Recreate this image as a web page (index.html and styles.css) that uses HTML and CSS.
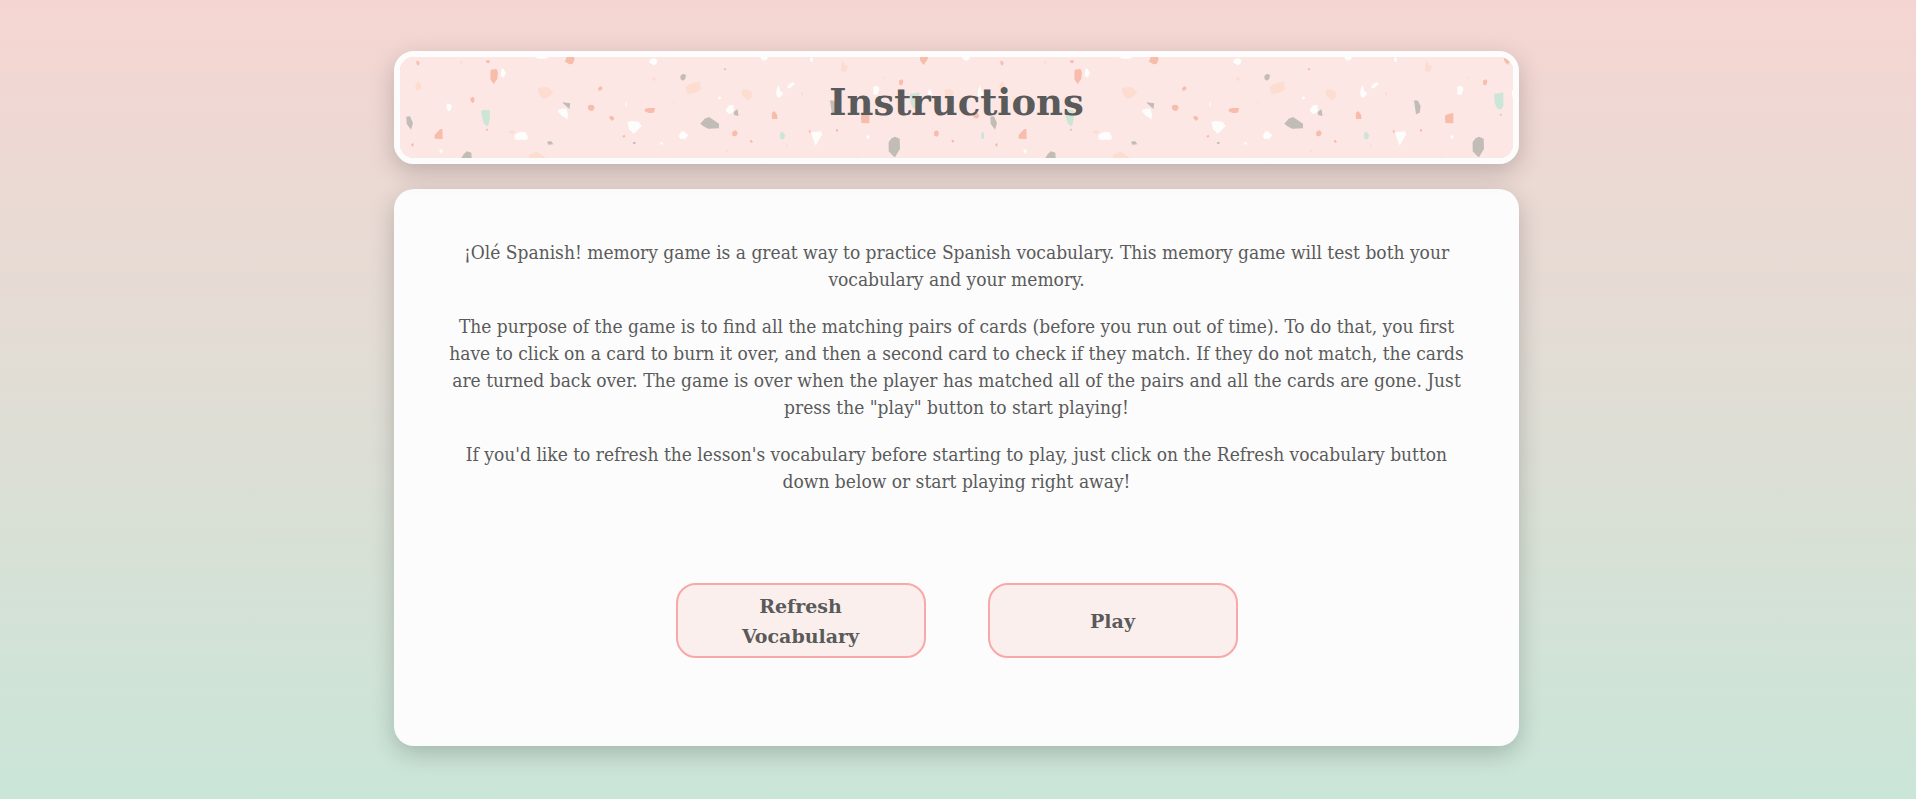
FILE: index.html
```html
<!DOCTYPE html>
<html lang="en">
<head>
<meta charset="utf-8">
<meta name="viewport" content="width=device-width, initial-scale=1">
<title>¡Olé Spanish! Instructions</title>
<link rel="stylesheet" href="styles.css">
</head>
<body>
<div class="page">
  <header class="banner">
    <svg class="terrazzo" aria-hidden="true" width="100%" height="100%">
      <defs>
        <pattern id="terrazzo" width="1752" height="900" patternUnits="userSpaceOnUse" patternTransform="scale(0.33333)">
          <rect class="base" width="1752" height="900"/>
          <g class="coral">
            <path d="M49 11l7 2 3 6-4 7-5-4zM259 10l9 0 2 5-5 4-7-3zM272 38l17-2 5 9-2 20-11 16-10-14zM500 0h22l2 6-6 15-10 1-13-8zM211 125l6-6 6 4 0 10-4 6-7-6zM121 216l6 0 1 30-24-1 0-11zM257 216l7-1 1 4-4 4zM33 262l7-4 1 7-4 5zM594 94l7-6 7 4-4 8-8 1zM564 147l7-4 10 2 3 8-5 8-9 0-6-6zM736 155l9-2 20 0 0 4-4 10-15 1-13-6zM627 180l7-4 9 6-2 7-7 2zM667 237l7-4 2 6-6 3zM971 34l6 0 3 4-7 2zM1117 165l7-2 8 12 0 11-15 0-2-7zM999 223l7-3 5 3 2 8-6 7-9-1-2-8zM1049 250l5-1 4 3-1 5-5 0zM1225 221l6-2 1 9-3 0zM1307 217l7-1 0 7-5 2zM1559 0h25l-1 6-12 18-10-13zM1498 70l9-3 3 6-4 12-8-2-1-7zM1384 175l10-4 14-3 0 31-24-1-1-14zM1603 223l7-3 6 4 0 9-5 6-9-3zM1654 249l6-1 3 6-6 3zM1546 172l6-1 2 3-4 3zM1720 172l14-3 4 10-8 6-10-4z"/>
          </g>
          <g class="peach">
            <path d="M178 16l6-5 5 5-5 8zM46 83l9-12 10 15-5 14-12 0zM418 93l10-2 15 0 17 15-10 11-14 9-14-6-9-19zM323 223l14-3 9 5-9 7zM386 303l2-9 21-10 22 13 6 6zM754 66l7-5 9 4-6 7zM818 137l6-2 1 4-4 1zM857 89l19-11 24-4 2 24-16 9-25 4zM1028 97l17 1 12 8-3 15-10 11-6-8-11-6-2-8zM1330 11l4 13 9 2-3 15-9 6-9-8 2-17zM1202 108l5-2 3 8-5 3zM1156 265l5-4 3 5-5 3zM978 279l5-2 1 8-5-1zM1634 97l16-1 11 7-3 15-10 9-12-10zM1450 62l5-3 2 4-5 2zM1367 302l4-3 3 4z"/>
          </g>
          <g class="mint">
            <path d="M243 163l8-4 18 0 1 18-3 23-6 8-9-8-5-15zM1140 227l6-3 10 10-4 12-11 0zM1531 110l8 0 19-4 0 42-8 10-11-4-7-17zM1744 227l8-2v20h-8z"/>
          </g>
          <g class="white">
            <path d="M303 40l5-7 10 14-4 10-7 6-5-10zM140 139l15 4 0 9-7 12-6-5-2-7zM118 279l8-3 2 8-7 6zM403 0h43l-8 5-22 0zM347 230l12-5 18 1 8 18-8 5-31-1-4-10zM475 159l10-4 14 0 5 15-1 17-18-11-12-13zM750 7l14-3 9 6-4 11-9 4-13-9zM682 196l10-4 24 2 9 14-24 23-14-15zM676 136l3-2 1 14-4-1zM780 257l7-3 2 8-8 1zM836 238l7-14 7-3 15 13-9 12-15-1zM1080 0h24l-4 8-11 4zM1230 4l5-4 4 7-1 9-7-3zM952 122l7-4 5 5-6 5zM987 145l13-2 2 15-5 11-12 2-8-12zM1129 98l7-15 5 20 9 4-5 10-11 7-5-11zM1161 90l9-11 12-3 2 5-9 9-10 5zM1233 226l30-3 4 9-20 34-6-15zM1399 237l6-3 4 5-4 8-4-3zM1420 89l9-3 9 5-1 12-5 11-12-2zM1583 101l8-4 5 13-4 14-7-3zM1686 0h25l-5 9-9 3-8-5zM1734 102l5-17 6 16 7 5v10l-19 2z"/>
          </g>
          <g class="stone">
            <path d="M19 179l11-1 9 21-6 19-13-18zM184 303l8-13 9-7 13 4 1 16zM486 136l25 3-3 17zM441 254l12-2 7 10-15 1zM697 257l7-3 4 5-6 3zM841 57l7-6 10 2-2 12-7 6-7-4zM901 200l13-15 13-5 9 6 21 14 0 14-33 1-15-8zM1001 166l11-10 4 21-13-3zM1466 255l9-11 10-5 14 6 1 30-15 26-6-5-13-13zM1290 130l12 1 8 17-3 19-11 5z"/>
          </g>
        </pattern>
      </defs>
      <rect width="100%" height="100%" fill="url(#terrazzo)"/>
    </svg>
    <h1 class="title">Instructions</h1>
  </header>
  <main class="card">
    <p>¡Olé Spanish! memory game is a great way to practice Spanish vocabulary. This memory game will test both your vocabulary and your memory.</p>
    <p>The purpose of the game is to find all the matching pairs of cards (before you run out of time). To do that, you first have to click on a card to burn it over, and then a second card to check if they match. If they do not match, the cards are turned back over. The game is over when the player has matched all of the pairs and all the cards are gone. Just press the "play" button to start playing!</p>
    <p>If you'd like to refresh the lesson's vocabulary before starting to play, just click on the Refresh vocabulary button down below or start playing right away!</p>
    <div class="actions">
      <button class="btn" type="button">Refresh Vocabulary</button>
      <button class="btn" type="button">Play</button>
    </div>
  </main>
</div>
</body>
</html>
```
FILE: styles.css
```css
* { box-sizing: border-box; }

body {
  margin: 0;
  padding-right: 3px;
  min-height: 100vh;
  background: linear-gradient(#f5d5d2, #cae6d8);
  color: #5a5a5a;
  font-family: "DejaVu Serif Condensed", "DejaVu Serif", serif;
}

.page {
  display: flex;
  flex-direction: column;
  gap: 25px;
  width: 90%;
  max-width: 1125px;
  margin: 0 auto;
  padding: 51px 0 53px;
}

.banner,
.card {
  border-radius: 20px;
  box-shadow: 0 8px 24px rgba(0, 0, 0, 0.2);
}

.banner {
  position: relative;
  overflow: hidden;
  padding: 21px 20px 32px;
  border: 6px solid #fcfcfc;
  text-align: center;
}

.terrazzo {
  position: absolute;
  inset: 0;
}

.base { fill: #fce7e5; }
.coral { fill: #f8bcab; }
.peach { fill: #fcddd0; }
.mint { fill: #cbe5d7; }
.white { fill: #fdfdfc; }
.stone { fill: #c1bcb6; }

.title {
  position: relative;
  margin: 0;
  font-family: "DejaVu Serif", serif;
  font-size: 37px;
  line-height: 48px;
}

.card {
  padding: 50px 49px 88px;
  background: #fcfcfc;
  text-align: center;
}

.card p {
  margin: 0 0 20px;
  font-size: 19px;
  line-height: 27px;
}

.actions {
  display: flex;
  flex-wrap: wrap;
  justify-content: center;
  gap: 62px;
  margin-top: 88px;
}

.btn {
  width: 250px;
  min-height: 75px;
  padding: 5px 50px;
  border: 2px solid #f8a8a6;
  border-radius: 20px;
  background: #fbefed;
  color: inherit;
  font: bold 19px/30px "DejaVu Serif", serif;
  cursor: pointer;
}
```
